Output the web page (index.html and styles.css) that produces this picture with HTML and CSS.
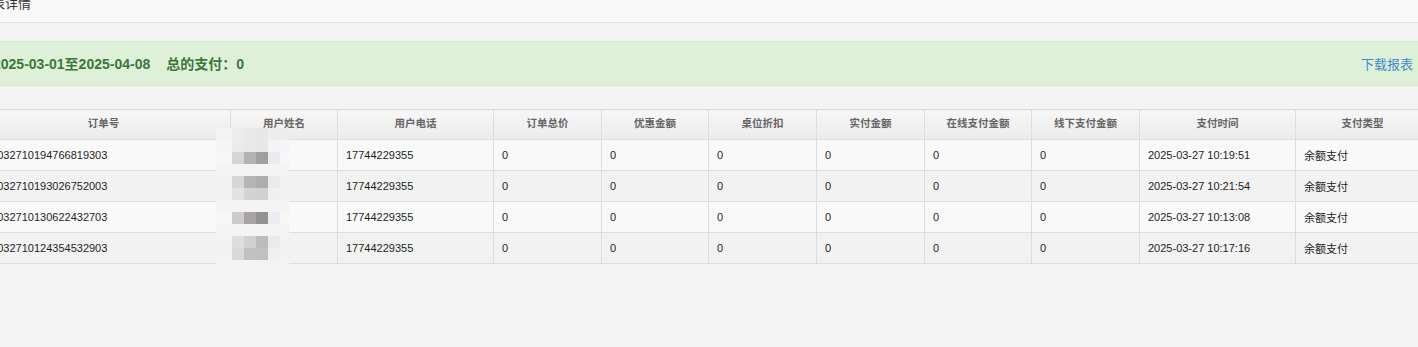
FILE: index.html
```html
<!DOCTYPE html>
<html lang="zh-CN">
<head>
<meta charset="utf-8">
<title>报表详情</title>
<link rel="stylesheet" href="styles.css">
</head>
<body>
<div class="page">
  <div class="topbar"><span class="title">报表详情</span></div>
  <div class="content">
    <div class="alert">
      <div class="summary"><span>2025-03-01至2025-04-08</span><span class="total">总的支付：0</span></div>
      <a class="download" href="#">下载报表</a>
    </div>
    <table class="report">
      <colgroup>
        <col class="c-order"><col class="c-name"><col class="c-phone"><col class="c-num"><col class="c-num2"><col class="c-num"><col class="c-num"><col class="c-num2"><col class="c-num"><col class="c-time"><col class="c-type">
      </colgroup>
      <thead>
        <tr><th>订单号</th><th>用户姓名</th><th>用户电话</th><th>订单总价</th><th>优惠金额</th><th>桌位折扣</th><th>实付金额</th><th>在线支付金额</th><th>线下支付金额</th><th>支付时间</th><th>支付类型</th></tr>
      </thead>
      <tbody>
        <tr><td>25032710194766819303</td><td></td><td>17744229355</td><td>0</td><td>0</td><td>0</td><td>0</td><td>0</td><td>0</td><td>2025-03-27 10:19:51</td><td>余额支付</td></tr>
        <tr><td>25032710193026752003</td><td></td><td>17744229355</td><td>0</td><td>0</td><td>0</td><td>0</td><td>0</td><td>0</td><td>2025-03-27 10:21:54</td><td>余额支付</td></tr>
        <tr><td>25032710130622432703</td><td></td><td>17744229355</td><td>0</td><td>0</td><td>0</td><td>0</td><td>0</td><td>0</td><td>2025-03-27 10:13:08</td><td>余额支付</td></tr>
        <tr><td>25032710124354532903</td><td></td><td>17744229355</td><td>0</td><td>0</td><td>0</td><td>0</td><td>0</td><td>0</td><td>2025-03-27 10:17:16</td><td>余额支付</td></tr>
      </tbody>
    </table>
  </div>
</div>
<div class="mosaic" aria-hidden="true">
  <div class="m m-light0"></div>
  <div class="m m-light1"></div>
  <div class="m m-d1"></div>
  <div class="m m-light"></div>
  <div class="m m-d2"></div>
  <div class="m m-d3"></div>
  <div class="m m-light"></div>
  <div class="m m-d4"></div>
  <div class="m m-light"></div>
  <div class="m m-d5"></div>
  <div class="m m-d6"></div>
  <div class="m m-light"></div>
</div>
</body>
</html>
```
FILE: styles.css
```css
html, body {
  margin: 0;
  padding: 0;
  background: #f3f3f3;
  overflow: hidden;
  font-family: "Liberation Sans", "Noto Sans CJK SC", sans-serif;
  color: #222;
}

.page {
  margin-left: -24px;
  margin-top: -17px;
  width: 1453px;
}

.topbar {
  height: 39px;
  line-height: 39px;
  background: #f9f9f9;
  border-bottom: 1px solid #e5e5e5;
  padding-left: 3px;
}

.title {
  font-size: 13px;
  color: #333;
}

.content {
  padding-top: 18px;
}

.alert {
  display: flex;
  align-items: center;
  justify-content: space-between;
  height: 43px;
  border: 1px solid #d6e9c6;
  background: #dff0d8;
  padding: 0 15px 0 16px;
  margin-bottom: 23px;
}

.summary {
  display: flex;
  gap: 16px;
  font-size: 14px;
  font-weight: bold;
  color: #3c763d;
  padding-bottom: 1px;
}

.download {
  font-size: 13px;
  color: #428bca;
  text-decoration: none;
}

.report {
  width: 1453px;
  table-layout: fixed;
  border-collapse: collapse;
  border-top: 1px solid #ddd;
  font-size: 11px;
}

.c-order { width: 254px; }
.c-name { width: 107px; }
.c-phone { width: 156px; }
.c-num { width: 108px; }
.c-num2 { width: 107px; }
.c-time { width: 156px; }
.c-type { width: 134px; }

.report th {
  height: 25px;
  padding: 0 0 4px;
  border: 1px solid #ddd;
  background: linear-gradient(#f7f7f7, #ebebeb);
  color: #666;
  font-size: 10.5px;
  font-weight: bold;
  text-align: center;
}

.report td {
  height: 30px;
  padding: 0 8px;
  border: 1px solid #ddd;
  white-space: nowrap;
  overflow: hidden;
  color: #1e1e1e;
}

.report tbody tr:nth-child(odd) td { background: #f9f9f9; }
.report tbody tr:nth-child(even) td { background: #f2f2f2; }

.mosaic {
  position: absolute;
  left: 216px;
  top: 128px;
  width: 73px;
}

.m { height: 12px; }

.m-light0 { background: linear-gradient(to right, #f3f3f3 0 16px, #ececec 16px 28px, #e9e9e9 28px 40px, #e7e7e7 40px 52px, #ededed 52px 73px); }
.m-light1 { background: linear-gradient(to right, #f5f5f5 0 16px, #ebebeb 16px 28px, #e8e8e8 28px 40px, #e7e7e7 40px 52px, #f2f4f5 52px 64px, #f5f5f5 64px 73px); }
.m-light { background: #f3f3f3; }
.m-d1 { background: linear-gradient(to right, #f7f7f7 0 16px, #d6d5d5 16px 28px, #b3b2b1 28px 40px, #a09f9d 40px 52px, #e8ecf0 52px 64px, #f7f7f7 64px 73px); }
.m-d2 { background: linear-gradient(to right, #f2f2f2 0 16px, #d7d6d6 16px 28px, #b5b5b4 28px 40px, #adadac 40px 52px, #e9ecef 52px 64px, #f2f2f2 64px 73px); }
.m-d3 { background: linear-gradient(to right, #f2f2f2 0 16px, #e3e2e2 16px 28px, #d3d3d3 28px 40px, #d1d1d1 40px 52px, #eef0f2 52px 64px, #f2f2f2 64px 73px); }
.m-d4 { background: linear-gradient(to right, #f7f7f7 0 16px, #cecbca 16px 28px, #a6a5a4 28px 40px, #929190 40px 52px, #e9edf1 52px 64px, #f7f7f7 64px 73px); }
.m-d5 { background: linear-gradient(to right, #f2f2f2 0 16px, #dddddd 16px 28px, #d0d0d0 28px 40px, #bcbcbc 40px 52px, #e8eaec 52px 64px, #f2f2f2 64px 73px); }
.m-d6 { background: linear-gradient(to right, #f2f2f2 0 16px, #d9d9d9 16px 28px, #c1c1c1 28px 40px, #c0c0c0 40px 52px, #edf0f3 52px 64px, #f2f2f2 64px 73px); }
```
